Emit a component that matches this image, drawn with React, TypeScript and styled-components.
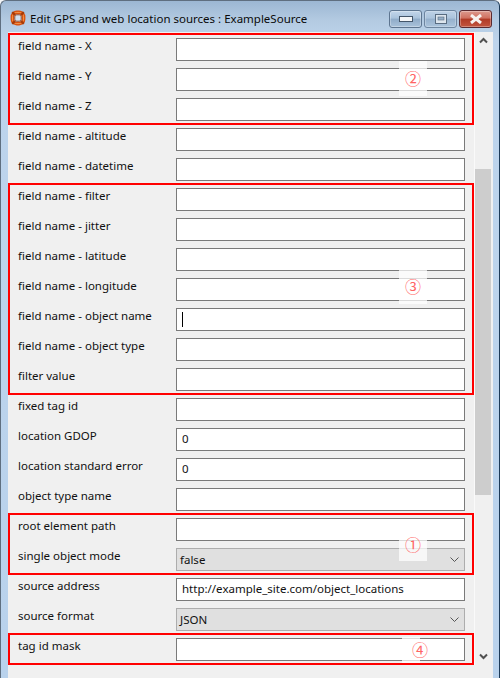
import React from "react";
import styled, { createGlobalStyle } from "styled-components";

const Global = createGlobalStyle`
  html, body { margin: 0; padding: 0; width: 500px; height: 678px; overflow: hidden; background: #f4f6f8; }
  * { box-sizing: border-box; }
`;

const FONT = `"Noto Sans", "Open Sans", sans-serif`;

const Window = styled.div`
  width: 500px;
  height: 678px;
  display: flex;
  flex-direction: column;
  overflow: hidden;
  border-radius: 6px 6px 0 0;
  border: 1px solid #5f6f80;
  border-bottom: 0;
  border-right-color: #1c3a58;
  background: linear-gradient(180deg, #9cb7d3 0, #b4cbe2 20px, #bdd4ec 40px, #b9d2ec 100%);
  font-family: ${FONT};
`;

const TitleBar = styled.div`
  height: 31px;
  flex: none;
  display: flex;
  align-items: flex-start;
  padding: 9px 8px 0 9px;
`;

const TitleText = styled.div`
  font-size: 11.5px;
  line-height: 16px;
  color: #0a0a0a;
  margin-left: 4px;
  margin-top: 1px;
  flex: 1;
  white-space: nowrap;
`;

const Controls = styled.div`
  display: flex;
  gap: 2px;
  margin-right: -1px;
`;

const CtrlButton = styled.div<{ $close?: boolean }>`
  width: 33px;
  height: 18px;
  border: 1px solid ${(p) => (p.$close ? "#5a2a30" : "#5d7590")};
  border-radius: 3px;
  display: flex;
  align-items: center;
  justify-content: center;
  background: ${(p) =>
    p.$close
      ? "linear-gradient(180deg, #dc9a8e 0, #d0705f 45%, #b03a26 50%, #c2553f 100%)"
      : "linear-gradient(180deg, #c3d6ea 0, #aac3dc 45%, #8fabc8 50%, #a9c2da 100%)"};
  box-shadow: inset 0 0 0 1px rgba(255, 255, 255, 0.3);
`;

const MaxButton = styled(CtrlButton)`
  opacity: 0.8;
`;

const Body = styled.div`
  flex: 1;
  min-height: 0;
  margin: 0 6px 0 7px;
  display: flex;
  background: #f0f0f0;
  overflow: hidden;
`;

const Form = styled.div`
  width: 467px;
  flex: none;
  padding: 2px 0 0 1px;
  display: flex;
  flex-direction: column;
  height: 633px;
  border-right: 1px solid #fafafa;
`;

const Group = styled.div`
  position: relative;
  width: 464px;
  outline: 2px solid #f00;
  outline-offset: -1px;
  z-index: 1;
`;

const Row = styled.div`
  height: 30px;
  display: flex;
  padding: 4px 0 0 9px;
`;

const Label = styled.div`
  width: 158px;
  flex: none;
  font-size: 11.5px;
  line-height: 16px;
  color: #111;
  white-space: nowrap;
`;

const Field = styled.div`
  position: relative;
  width: 289px;
  height: 23px;
  flex: none;
`;

const TextInput = styled.input`
  display: block;
  width: 100%;
  height: 100%;
  border: 1px solid #7a7a7a;
  border-radius: 0;
  background: #fff;
  padding: 0 6px 2px 5px;
  margin: 0;
  font: 11.5px/16px ${FONT};
  color: #111;
  outline: none;
`;

const Combo = styled.div`
  width: 100%;
  height: 100%;
  border: 1px solid #adadad;
  background: #e0e0e0;
  display: flex;
  align-items: center;
  justify-content: space-between;
  padding: 0 5px 0 3px;
  font-size: 11.5px;
  color: #111;
`;

const Caret = styled.div`
  position: absolute;
  left: 6px;
  top: 4px;
  width: 1px;
  height: 15px;
  background: #000;
`;

const Callout = styled.div<{ $w: number; $h: number; $x: number; $y: number; $gx: number }>`
  position: absolute;
  left: ${(p) => p.$x}px;
  top: ${(p) => p.$y}px;
  width: ${(p) => p.$w}px;
  height: ${(p) => p.$h}px;
  background: rgba(255, 255, 255, 0.72);
  display: flex;
  align-items: center;
  justify-content: ${(p) => (p.$gx ? "flex-start" : "center")};
  padding: 0 0 2px ${(p) => p.$gx}px;
  white-space: nowrap;
  font: 16px/16px "Noto Sans CJK JP", "DejaVu Sans", sans-serif;
  color: #ff6464;
`;

const ScrollBar = styled.div`
  width: 16px;
  height: 633px;
  flex: none;
  display: flex;
  flex-direction: column;
`;

const ScrollArrow = styled.div`
  height: 17px;
  flex: none;
  display: flex;
  align-items: center;
  justify-content: center;
`;

const ScrollTrack = styled.div`
  flex: 1;
  padding-top: 120px;
`;

const Thumb = styled.div`
  height: 326px;
  background: #cdcdcd;
`;

const LifeRing = () => (
  <svg width="16" height="16" viewBox="0 0 16 16" style={{ flex: "none" }}>
    <rect x="2.4" y="2.4" width="11.2" height="11.2" rx="4.4" fill="none" stroke="#d9500c" strokeWidth="3.6" />
    <rect x="2.4" y="2.4" width="11.2" height="11.2" rx="4.4" fill="none" stroke="#f39a50" strokeWidth="1" />
    <path d="M2.2 2.2 5 5M13.8 2.2 11 5M2.2 13.8 5 11M13.8 13.8 11 11" stroke="#a83a06" strokeWidth="2.4" />
    <rect x="4.8" y="4.8" width="6.4" height="6.4" rx="2" fill="#cfe0f0" stroke="#8a3205" strokeWidth="0.8" />
  </svg>
);

const Chevron = ({ up }: { up?: boolean }) => (
  <svg width="9" height="7" viewBox="0 0 9 7">
    <path d={up ? "M1 5.5 4.5 2 8 5.5" : "M1 1.5 4.5 5 8 1.5"} fill="none" stroke="#505050" strokeWidth="2" />
  </svg>
);

const ComboChevron = () => (
  <svg width="9" height="5" viewBox="0 0 9 5">
    <path d="M.5.5 4.5 4.5 8.5.5" fill="none" stroke="#555" strokeWidth="1" />
  </svg>
);

type RowSpec = { label: string; value?: string; combo?: boolean; caret?: boolean };

const FormRow = ({ label, value = "", combo, caret }: RowSpec) => (
  <Row>
    <Label>{label}</Label>
    <Field>
      {combo ? (
        <Combo>
          <span>{value}</span>
          <ComboChevron />
        </Combo>
      ) : (
        <TextInput readOnly value={value} />
      )}
      {caret && <Caret />}
    </Field>
  </Row>
);

export default function App() {
  return (
    <Window>
      <Global />
      <TitleBar>
        <LifeRing />
        <TitleText>Edit GPS and web location sources : ExampleSource</TitleText>
        <Controls>
          <CtrlButton>
            <svg width="14" height="6" viewBox="0 0 14 6">
              <rect x=".5" y=".5" width="13" height="5" fill="#f4f6f8" stroke="#44566a" />
            </svg>
          </CtrlButton>
          <MaxButton>
            <svg width="12" height="10" viewBox="0 0 12 10">
              <rect x=".5" y=".5" width="11" height="9" fill="#e8edf2" stroke="#44566a" />
              <rect x="3" y="3" width="6" height="3" fill="#8fa8c0" stroke="#44566a" strokeWidth=".6" />
            </svg>
          </MaxButton>
          <CtrlButton $close>
            <svg width="14" height="10" viewBox="0 0 14 10">
              <path d="M2 1 12 9M12 1 2 9" stroke="#f6f2f0" strokeWidth="3" />
            </svg>
          </CtrlButton>
        </Controls>
      </TitleBar>
      <Body>
        <Form>
          <Group>
            <FormRow label="field name - X" />
            <FormRow label="field name - Y" />
            <FormRow label="field name - Z" />
            <Callout $x={390} $y={27} $w={28} $h={35} $gx={0}>②</Callout>
          </Group>
          <FormRow label="field name - altitude" />
          <FormRow label="field name - datetime" />
          <Group>
            <FormRow label="field name - filter" />
            <FormRow label="field name - jitter" />
            <FormRow label="field name - latitude" />
            <FormRow label="field name - longitude" />
            <FormRow label="field name - object name" caret />
            <FormRow label="field name - object type" />
            <FormRow label="filter value" />
            <Callout $x={390} $y={86} $w={28} $h={34} $gx={0}>③</Callout>
          </Group>
          <FormRow label="fixed tag id" />
          <FormRow label="location GDOP" value="0" />
          <FormRow label="location standard error" value="0" />
          <FormRow label="object type name" />
          <Group>
            <FormRow label="root element path" />
            <FormRow label="single object mode" value="false" combo />
            <Callout $x={390} $y={14} $w={28} $h={33} $gx={0}>①</Callout>
          </Group>
          <FormRow label="source address" value="http://example_site.com/object_locations" />
          <FormRow label="source format" value="JSON" combo />
          <Group>
            <FormRow label="tag id mask" />
            <Callout $x={393} $y={3} $w={18} $h={26} $gx={10}>④</Callout>
          </Group>
        </Form>
        <ScrollBar>
          <ScrollArrow><Chevron up /></ScrollArrow>
          <ScrollTrack><Thumb /></ScrollTrack>
          <ScrollArrow><Chevron /></ScrollArrow>
        </ScrollBar>
      </Body>
    </Window>
  );
}
